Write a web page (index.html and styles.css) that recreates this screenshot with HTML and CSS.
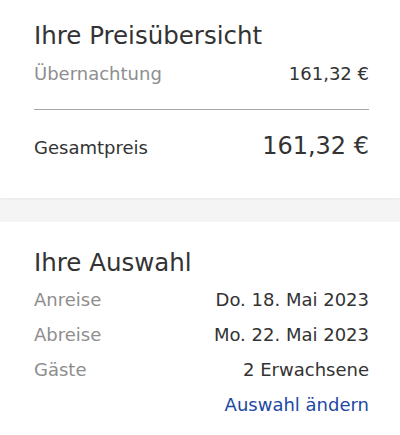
FILE: index.html
```html
<!DOCTYPE html>
<html lang="de">
<head>
<meta charset="utf-8">
<link rel="stylesheet" href="styles.css">
</head>
<body>
<section class="card card-price">
  <h2 class="title">Ihre Preisübersicht</h2>
  <div class="row first">
    <span class="label">Übernachtung</span>
    <span class="value">161,32 €</span>
  </div>
  <hr class="divider">
  <div class="row total">
    <span class="total-label">Gesamtpreis</span>
    <span class="total-value">161,32 €</span>
  </div>
</section>
<section class="card card-selection">
  <h2 class="title">Ihre Auswahl</h2>
  <div class="row first">
    <span class="label">Anreise</span>
    <span class="value">Do. 18. Mai 2023</span>
  </div>
  <div class="row">
    <span class="label">Abreise</span>
    <span class="value">Mo. 22. Mai 2023</span>
  </div>
  <div class="row">
    <span class="label">Gäste</span>
    <span class="value">2 Erwachsene</span>
  </div>
  <div class="row link-row">
    <a class="link" href="#">Auswahl ändern</a>
  </div>
</section>
</body>
</html>
```
FILE: styles.css
```css
html, body {
  margin: 0;
  padding: 0;
}
body {
  background: #f4f4f4;
  font-family: "DejaVu Sans", Verdana, sans-serif;
  color: #333;
  width: 400px;
  height: 435px;
  overflow: hidden;
}
.card {
  background: #fff;
  padding: 0 31px 0 34px;
}
.card-price {
  padding-top: 18px;
  padding-bottom: 33px;
  box-shadow: 0 1px 3px rgba(0, 0, 0, 0.06);
}
.card-selection {
  margin-top: 24px;
  padding-top: 23px;
  padding-bottom: 30px;
}
.title {
  margin: 0;
  font-size: 24.5px;
  font-weight: normal;
  line-height: 35px;
  color: #333;
}
.row {
  display: flex;
  justify-content: space-between;
  align-items: baseline;
  font-size: 18px;
  line-height: 35px;
}
.row.first {
  margin-top: 2px;
}
.card-price .row.first {
  margin-top: 3px;
}
.label {
  color: #8e8e8e;
}
.value {
  color: #333;
}
.divider {
  border: 0;
  border-top: 1px solid #a8a8a8;
  margin: 18px 0 0 0;
  height: 0;
}
.row.total {
  margin-top: 19px;
}
.total-label {
  color: #333;
}
.total-value {
  font-size: 24px;
  color: #333;
}
.link-row {
  justify-content: flex-end;
}
.link {
  color: #1c49a3;
  text-decoration: none;
}
```
